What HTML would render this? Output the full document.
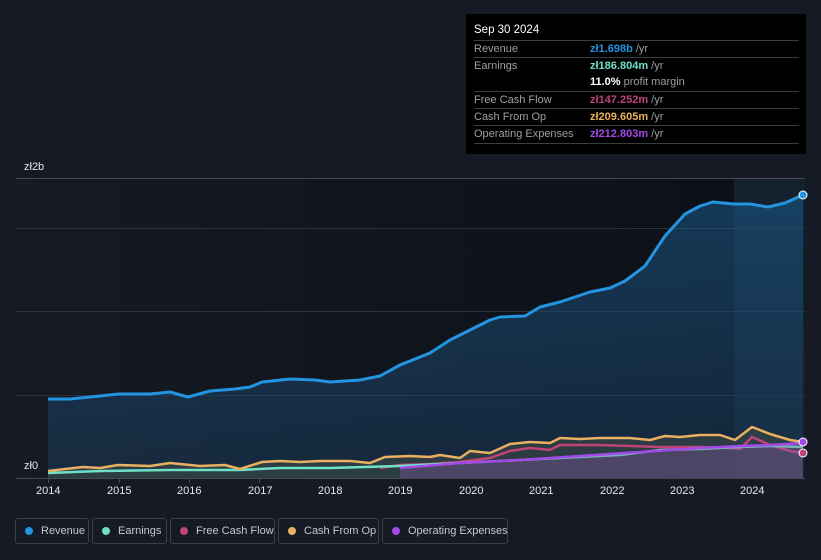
<!DOCTYPE html>
<html><head><meta charset="utf-8"><style>
body{margin:0;width:821px;height:560px;background:#151a24;font-family:"Liberation Sans",sans-serif;overflow:hidden;position:relative}
.tt{position:absolute;left:466px;top:14px;width:340px;height:140px;background:#000;color:#9aa0a6;font-size:11px}
.tt .h{position:absolute;left:8px;top:10px;color:#fff;font-size:11.5px}
.row{position:absolute;left:8px;width:325px;border-top:1px solid #3a3d42;height:17px;line-height:17px}
.row span{position:absolute;left:116px}
.leg{position:absolute;top:518px;height:26px;border:1px solid #3a3f48;border-radius:3px;color:#c5c9d0;font-size:11px;line-height:24px;box-sizing:border-box;padding-left:25px;white-space:nowrap}
.leg i{position:absolute;left:9px;top:8px;width:8px;height:8px;border-radius:50%}
.ax{position:absolute;color:#e6e8eb;font-size:11px}
</style></head><body>
<svg width="821" height="560" style="position:absolute;left:0;top:0">
<defs>
<linearGradient id="bg" x1="0" x2="1"><stop offset="0" stop-color="#151a24"/><stop offset="1" stop-color="#0c1017"/></linearGradient>
<linearGradient id="rf" x1="0" y1="0" x2="0" y2="1"><stop offset="0" stop-color="#1a5a8a" stop-opacity=".55"/><stop offset="1" stop-color="#1b3a5a" stop-opacity=".5"/></linearGradient>
</defs>
<rect x="16" y="178" width="718" height="300" fill="url(#bg)"/>
<rect x="734" y="178" width="71" height="300" fill="#13202e"/>
<g stroke="#2c313a" stroke-width="1"><line x1="16" x2="805" y1="178.5" y2="178.5" stroke="#444a52"/><line x1="16" x2="805" y1="228.5" y2="228.5"/><line x1="16" x2="805" y1="311.5" y2="311.5"/><line x1="16" x2="805" y1="395.5" y2="395.5"/><line x1="16" x2="805" y1="478.5" y2="478.5" stroke="#444a52"/></g>
<path d="M48,399 L70,399 100,396 118,394 150,394 170,392 188,397 210,391 235,389 250,387 262,382 290,379 315,380 330,382 360,380 380,376 400,365 430,353 450,340 470,330 490,320 500,317 525,316 540,307 560,302 590,292 610,288 625,281 645,266 665,236 685,214 700,206 713,202 734,204 750,204 768,207 785,203 803,195 L803,478 48,478Z" fill="url(#rf)"/>
<path d="M48,399 L70,399 100,396 118,394 150,394 170,392 188,397 210,391 235,389 250,387 262,382 290,379 315,380 330,382 360,380 380,376 400,365 430,353 450,340 470,330 490,320 500,317 525,316 540,307 560,302 590,292 610,288 625,281 645,266 665,236 685,214 700,206 713,202 734,204 750,204 768,207 785,203 803,195" fill="none" stroke="#2394e0" stroke-width="3" stroke-linejoin="round"/>
<path d="M48,471 83,467 100,468 118,465 150,466 170,463 200,466 225,465 240,469 262,462 280,461 300,462 320,461 350,461 370,463 385,457 410,456 430,457 440,455 460,458 470,451 490,453 510,444 530,442 550,443 560,438 580,439 600,438 630,438 650,440 665,436 680,437 700,435 720,435 735,440 752,427 770,434 790,440 803,442 L803,478 48,478Z" fill="#3d4a48" fill-opacity=".6"/>
<path d="M380,468 400,465 430,464 460,462 490,458 510,451 530,448 550,450 560,445 600,445 630,446 660,447 700,447 730,448 740,449 752,437 770,445 790,451 803,453" fill="none" stroke="#c0447a" stroke-width="2.5"/>
<path d="M48,473 100,471 170,470 240,470 280,468 330,468 400,466 460,463 520,460 560,458 620,455 660,450 700,449 740,447 770,446 803,447" fill="none" stroke="#6fe0c8" stroke-width="2.5"/>
<path d="M400,468 460,463 520,460 580,456 640,452 700,448 740,446 770,445 803,443 L803,478 400,478Z" fill="#8a5aa8" fill-opacity=".35"/>
<path d="M400,468 460,463 520,460 580,456 640,452 700,448 740,446 770,445 803,443" fill="none" stroke="#a24ae8" stroke-width="2.5"/>
<path d="M48,471 83,467 100,468 118,465 150,466 170,463 200,466 225,465 240,469 262,462 280,461 300,462 320,461 350,461 370,463 385,457 410,456 430,457 440,455 460,458 470,451 490,453 510,444 530,442 550,443 560,438 580,439 600,438 630,438 650,440 665,436 680,437 700,435 720,435 735,440 752,427 770,434 790,440 803,442" fill="none" stroke="#e8b060" stroke-width="2.5" stroke-linejoin="round"/>
<circle cx="803" cy="195" r="4" fill="#2394e0" stroke="#fff" stroke-width="1"/>
<circle cx="803" cy="453" r="4" fill="#c0447a" stroke="#fff" stroke-width="1"/>
<circle cx="803" cy="442" r="4" fill="#a24ae8" stroke="#fff" stroke-width="1"/>
<g stroke="#444a52"><line x1="48.5" x2="48.5" y1="478" y2="483"/><line x1="119.5" x2="119.5" y1="478" y2="483"/><line x1="189.5" x2="189.5" y1="478" y2="483"/><line x1="259.5" x2="259.5" y1="478" y2="483"/></g>
</svg>
<div class="ax" style="left:24px;top:161px">zł2b</div>
<div class="ax" style="left:24px;top:460px">zł0</div>
<div class="ax" style="left:36px;top:485px">2014</div>
<div class="ax" style="left:107px;top:485px">2015</div>
<div class="ax" style="left:177px;top:485px">2016</div>
<div class="ax" style="left:248px;top:485px">2017</div>
<div class="ax" style="left:318px;top:485px">2018</div>
<div class="ax" style="left:388px;top:485px">2019</div>
<div class="ax" style="left:459px;top:485px">2020</div>
<div class="ax" style="left:529px;top:485px">2021</div>
<div class="ax" style="left:600px;top:485px">2022</div>
<div class="ax" style="left:670px;top:485px">2023</div>
<div class="ax" style="left:740px;top:485px">2024</div>
<div class="tt">
<div class="h">Sep 30 2024</div>
<div class="row" style="top:26px">Revenue<span><b style="color:#2394e0">zł1.698b</b> /yr</span></div>
<div class="row" style="top:43px">Earnings<span><b style="color:#6fe0c8">zł186.804m</b> /yr</span></div>
<div class="row" style="top:60px;border-top:none"><span><b style="color:#fff">11.0%</b> profit margin</span></div>
<div class="row" style="top:77px">Free Cash Flow<span><b style="color:#c0447a">zł147.252m</b> /yr</span></div>
<div class="row" style="top:94px">Cash From Op<span><b style="color:#e8b060">zł209.605m</b> /yr</span></div>
<div class="row" style="top:111px">Operating Expenses<span><b style="color:#a24ae8">zł212.803m</b> /yr</span></div>
<div class="row" style="top:129px;height:0"></div>
</div>
<div class="leg" style="left:15px;width:74px"><i style="background:#2394e0"></i>Revenue</div>
<div class="leg" style="left:92px;width:75px"><i style="background:#6fe0c8"></i>Earnings</div>
<div class="leg" style="left:170px;width:105px"><i style="background:#c0447a"></i>Free Cash Flow</div>
<div class="leg" style="left:278px;width:101px"><i style="background:#e8b060"></i>Cash From Op</div>
<div class="leg" style="left:382px;width:126px"><i style="background:#a24ae8"></i>Operating Expenses</div>
</body></html>
